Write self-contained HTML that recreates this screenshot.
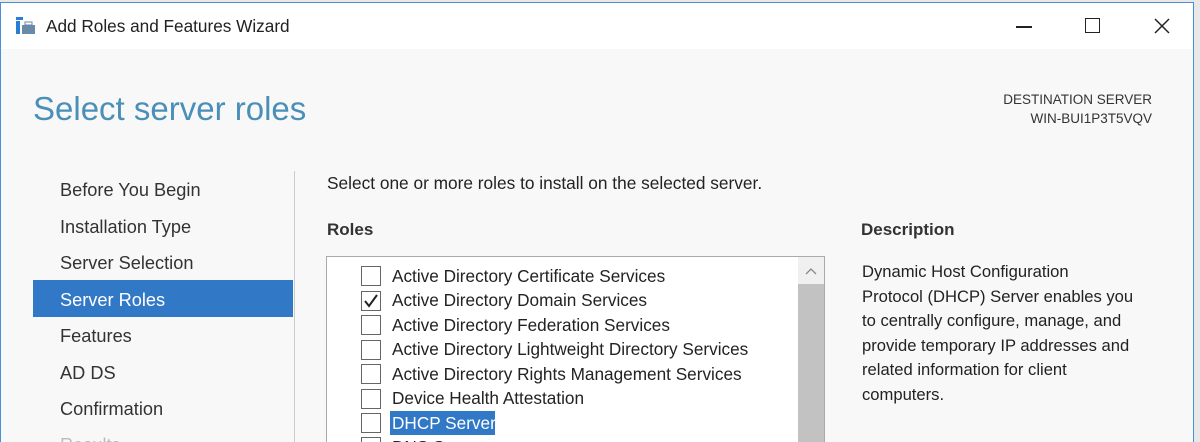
<!DOCTYPE html>
<html><head><style>
*{margin:0;padding:0;box-sizing:border-box}
html,body{width:1200px;height:442px;overflow:hidden}
body{background:#e8e8e8;font-family:"Liberation Sans",sans-serif;position:relative}
.win{position:absolute;left:0;top:2px;width:1194px;height:440px;overflow:hidden;border:1px solid #4a90d9;border-bottom:none;background:#f8f8f8}
.tb{position:absolute;left:0;top:0;width:100%;height:46px;background:#fff}
.t{position:absolute;font-size:16px;color:#222;white-space:nowrap}
.nav{position:absolute;left:59px;font-size:18.2px;color:#333}
.role{position:absolute;left:391px;font-size:17.2px;color:#222;white-space:nowrap}
.cb{position:absolute;left:360px;width:20px;height:20px;border:1px solid #666;background:#fff}
</style></head><body>
<div class="win">
<div class="tb">
<svg style="position:absolute;left:14px;top:13px" width="22" height="20"><rect x="1" y="1" width="7" height="3" fill="#2a7fd4"/><rect x="1" y="5" width="4" height="13" fill="#2a7fd4"/><rect x="7" y="9" width="13" height="9" fill="#6a8aa8"/><rect x="10" y="6" width="7" height="3" fill="none" stroke="#6a8aa8"/></svg>
<div class="t" style="left:45px;top:13px;font-size:17.2px">Add Roles and Features Wizard</div>
<div style="position:absolute;left:1015px;top:23px;width:16px;height:1.5px;background:#222"></div>
<div style="position:absolute;left:1084px;top:15px;width:15px;height:15px;border:1.5px solid #222"></div>
<svg style="position:absolute;left:1153px;top:15px" width="16" height="16"><path d="M1 1L15 15M15 1L1 15" stroke="#222" stroke-width="1.5"/></svg>
</div>
<div class="t" style="left:32px;top:87px;font-size:33px;color:#4a8fb8;font-weight:300">Select server roles</div>
<div class="t" style="left:940px;top:87px;width:211px;text-align:right;font-size:13.5px;line-height:19px;color:#333">DESTINATION SERVER<br>WIN-BUI1P3T5VQV</div>
<div class="nav" style="top:177px">Before You Begin</div>
<div class="nav" style="top:214px">Installation Type</div>
<div class="nav" style="top:250px">Server Selection</div>
<div style="position:absolute;left:32px;top:277px;width:260px;height:37px;background:#3178c6"></div>
<div class="nav" style="top:287px;color:#fff">Server Roles</div>
<div class="nav" style="top:323px">Features</div>
<div class="nav" style="top:360px">AD DS</div>
<div class="nav" style="top:396px">Confirmation</div>
<div class="nav" style="top:432px;color:#bbb">Results</div>
<div style="position:absolute;left:293px;top:168px;width:1px;height:280px;background:#ccc"></div>
<div class="t" style="left:326px;top:170px;font-size:17.3px">Select one or more roles to install on the selected server.</div>
<div class="t" style="left:326px;top:217px;font-size:17px;font-weight:bold;color:#333">Roles</div>
<div class="t" style="left:860px;top:217px;font-size:17px;font-weight:bold;color:#333">Description</div>
<div class="t" style="left:861px;top:257px;font-size:16.6px;line-height:24.5px;color:#222">Dynamic Host Configuration<br>Protocol (DHCP) Server enables you<br>to centrally configure, manage, and<br>provide temporary IP addresses and<br>related information for client<br>computers.</div>
<div style="position:absolute;left:325px;top:253px;width:499px;height:200px;border:1px solid #aaa;background:#fff">
<div style="position:absolute;left:471px;top:0;width:26px;height:200px;background:#f0f0f0"></div>
<div style="position:absolute;left:471px;top:27px;width:26px;height:180px;background:#c2c2c2"></div>
<svg style="position:absolute;left:477px;top:10px" width="14" height="10"><path d="M2 7L7 2L12 7" stroke="#888" fill="none" stroke-width="1.3"/></svg>
</div>
<div class="cb" style="top:263px"></div><div class="role" style="top:263px">Active Directory Certificate Services</div>
<div class="cb" style="top:288px"><svg width="18" height="18"><path d="M3 9L7 14L15 3" stroke="#222" stroke-width="2" fill="none"/></svg></div><div class="role" style="top:287px">Active Directory Domain Services</div>
<div class="cb" style="top:312px"></div><div class="role" style="top:312px">Active Directory Federation Services</div>
<div class="cb" style="top:337px"></div><div class="role" style="top:336px">Active Directory Lightweight Directory Services</div>
<div class="cb" style="top:361px"></div><div class="role" style="top:361px">Active Directory Rights Management Services</div>
<div class="cb" style="top:386px"></div><div class="role" style="top:385px">Device Health Attestation</div>
<div class="cb" style="top:410px"></div><div style="position:absolute;left:389px;top:408px;width:105px;height:24px;background:#3178c6"></div><div class="role" style="top:410px;color:#fff">DHCP Server</div>
<div class="cb" style="top:434px"></div><div class="role" style="top:434px">DNS Server</div>
</div>
</body></html>
